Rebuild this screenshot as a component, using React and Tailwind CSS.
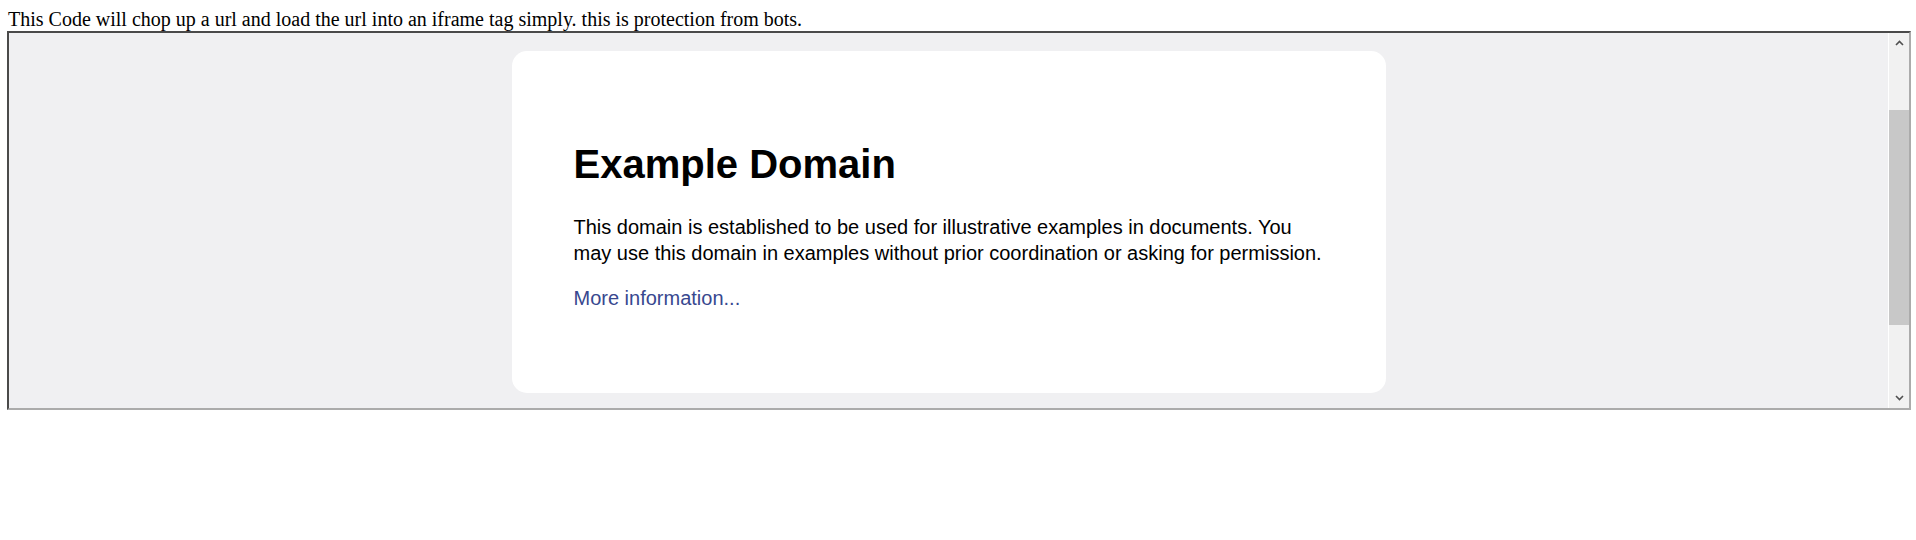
export default function App() {
  return (
    <div className="w-[1916px] h-[540px] bg-white overflow-hidden">
      <div className="pt-[8px]">
        <div
          className="ml-[8px] text-[20px] leading-[23px] text-black"
          style={{ fontFamily: '"Liberation Serif", "Times New Roman", serif' }}
        >
          This Code will chop up a url and load the url into an iframe tag simply. this is protection from bots.
        </div>
        <div className="ml-[7px] w-[1904px] h-[379px] border-2 border-t-[#4a4a4a] border-l-[#4a4a4a] border-b-[#ababab] border-r-[#ababab] flex bg-[#f0f0f2]">
          <div className="flex-1 overflow-hidden" style={{ fontFamily: '"Liberation Sans", Arial, sans-serif' }}>
            <div className="mx-auto mt-[18px] w-[874px] h-[342px] bg-white rounded-[15px] pl-[62px] pr-[60px] pt-[90px]">
              <h1 className="text-[40px] leading-[46px] font-bold text-black">Example Domain</h1>
              <p className="mt-[27px] text-[20px] leading-[26px] text-black">
                This domain is established to be used for illustrative examples in documents. You may use this domain in examples without prior coordination or asking for permission.
              </p>
              <p className="mt-[19px] text-[20px] leading-[26px]">
                <a className="text-[#38488f] no-underline">More information...</a>
              </p>
            </div>
          </div>
          <div className="w-[21px] border-l border-l-white bg-[#f1f1f1] flex flex-col items-center">
            <div className="h-[20px] w-full flex items-center justify-center">
              <svg width="9" height="6" viewBox="0 0 9 6">
                <path d="M1 5 L4.5 1.5 L8 5" fill="none" stroke="#505050" strokeWidth="1.6" />
              </svg>
            </div>
            <div className="flex-1 w-full px-0">
              <div className="mt-[57px] h-[215px] w-full bg-[#c8c8c8]" />
            </div>
            <div className="h-[20px] w-full flex items-center justify-center">
              <svg width="9" height="6" viewBox="0 0 9 6">
                <path d="M1 1 L4.5 4.5 L8 1" fill="none" stroke="#505050" strokeWidth="1.6" />
              </svg>
            </div>
          </div>
        </div>
      </div>
    </div>
  );
}
